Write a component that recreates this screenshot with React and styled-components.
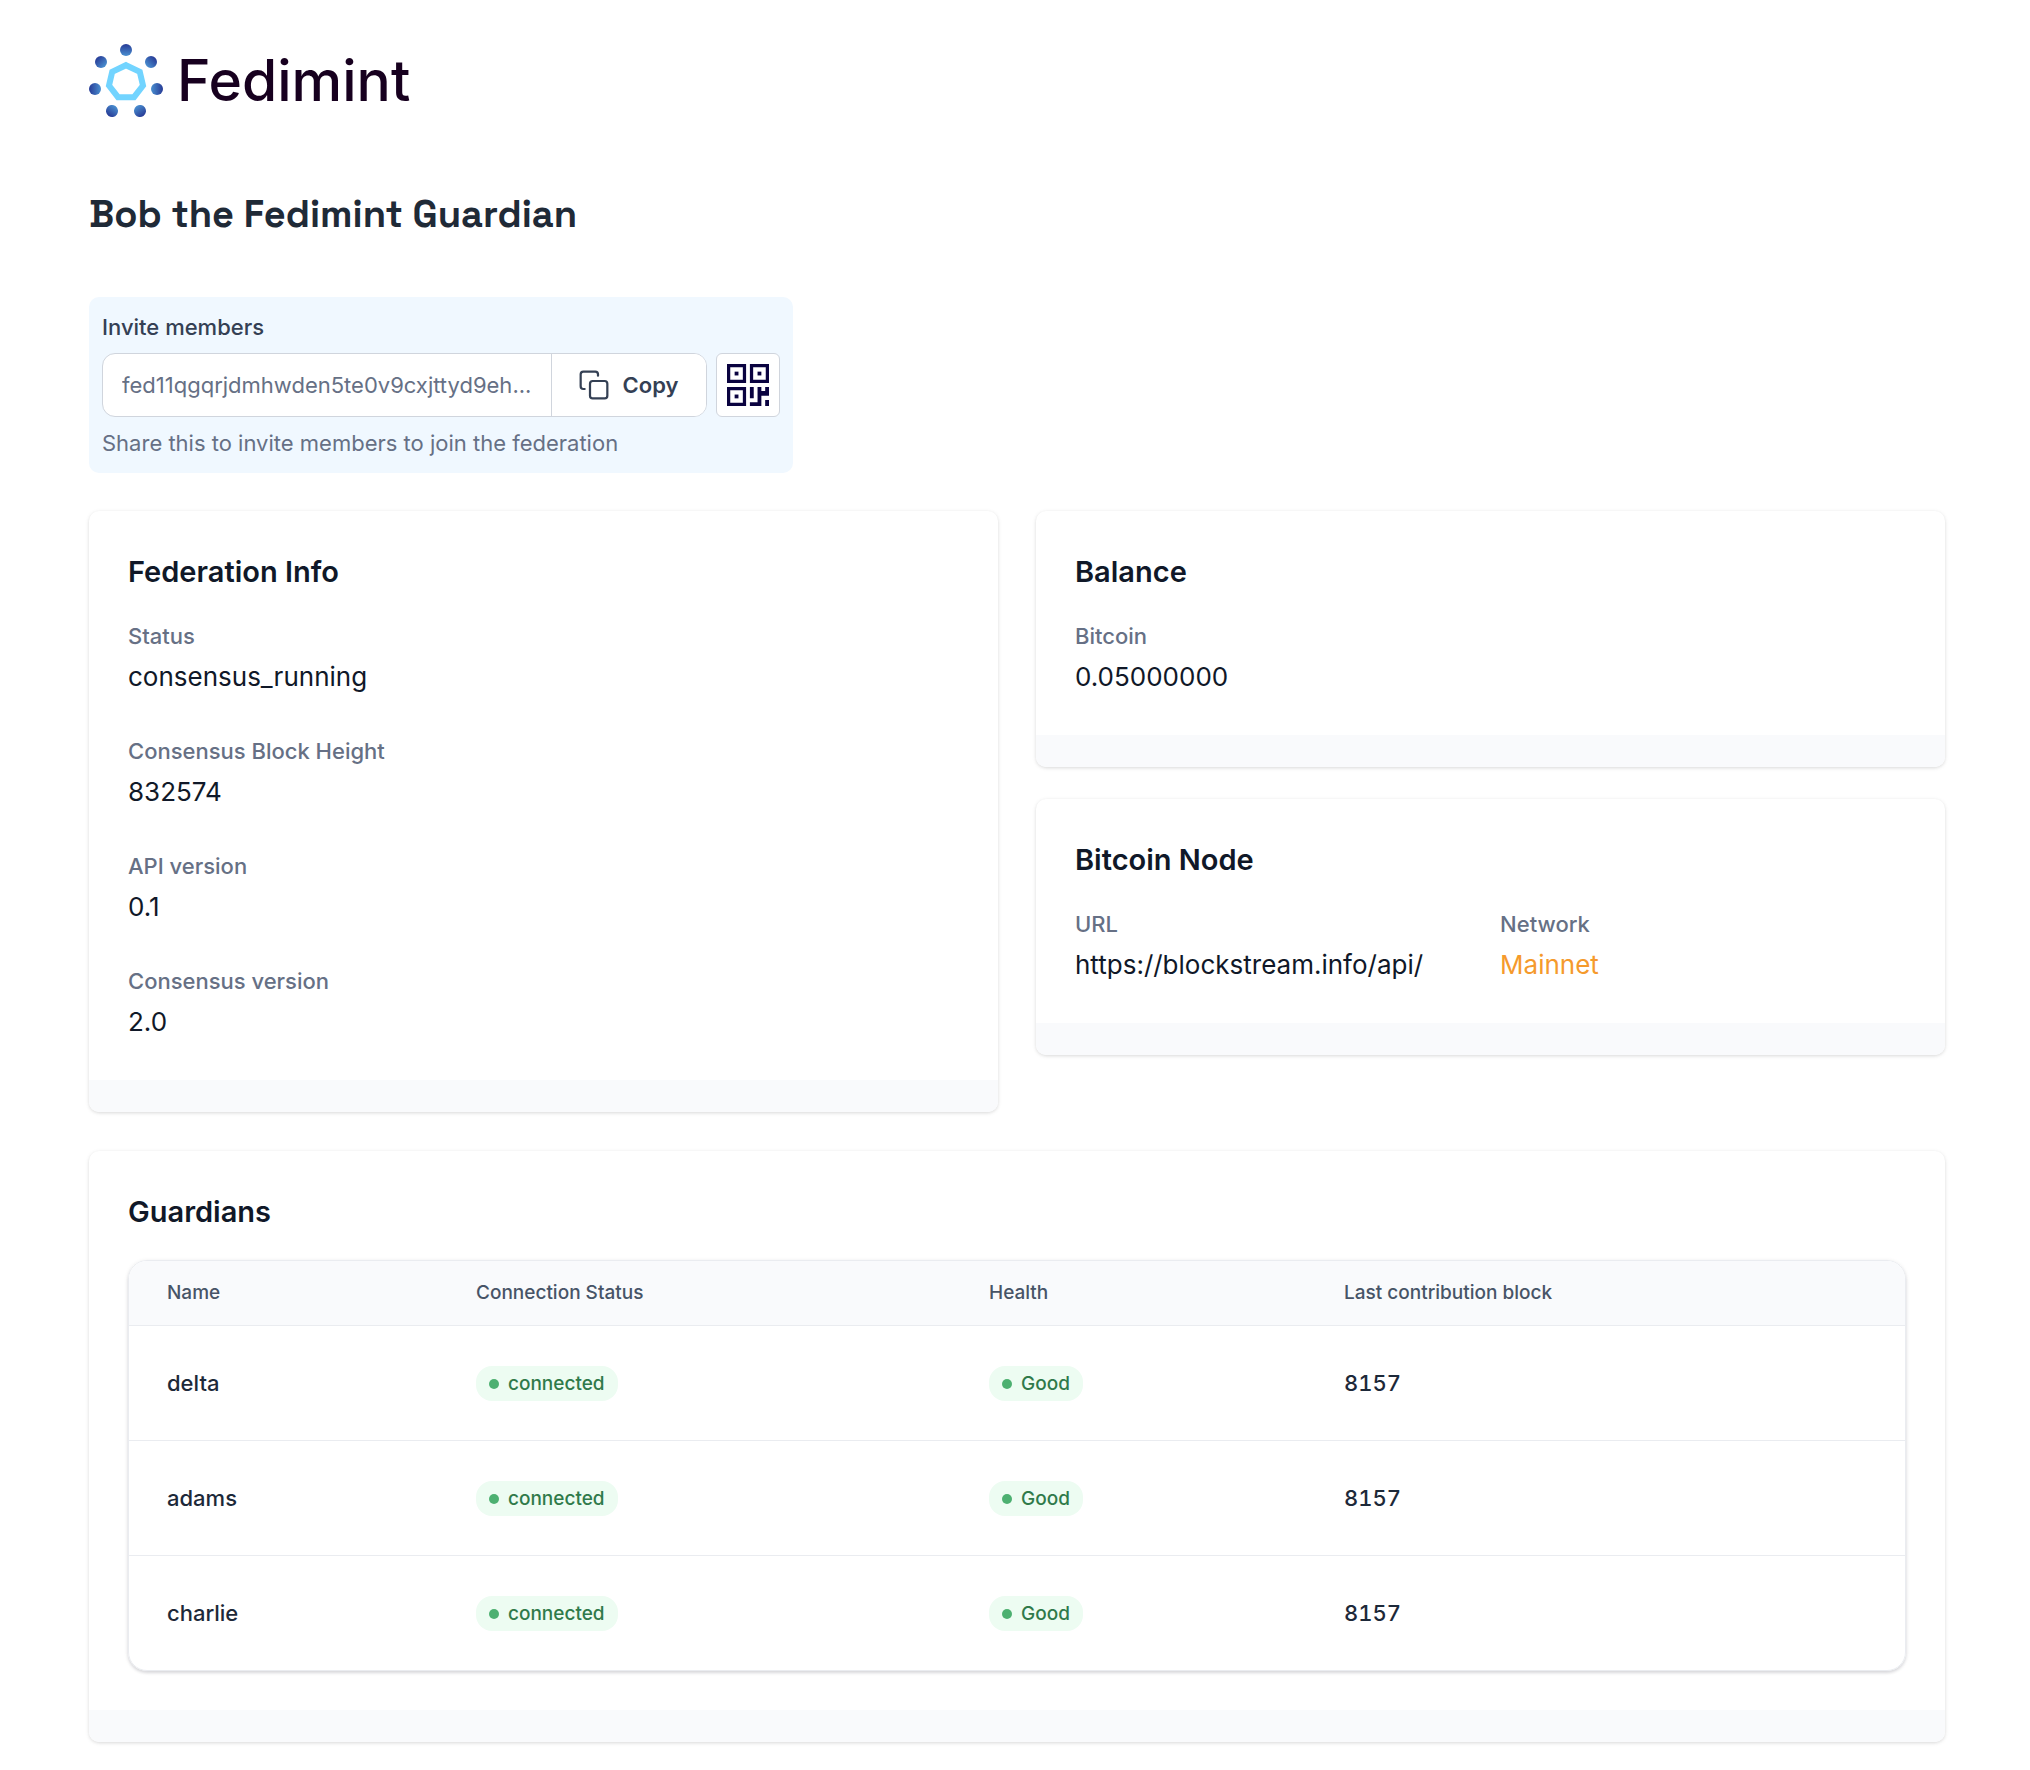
import React from "react";
import styled, { createGlobalStyle } from "styled-components";

const GlobalStyle = createGlobalStyle`
  *, *::before, *::after { box-sizing: border-box; }
  body {
    margin: 0;
    background: #fff;
    color: #101828;
    font-family: Inter, "Liberation Sans", sans-serif;
    -webkit-font-smoothing: antialiased;
  }
  h1, h2, p, dl, dd { margin: 0; }
`;

const Page = styled.main`
  display: flex;
  flex-direction: column;
  align-items: stretch;
  padding: 44px 85px 28px 89px;
`;

const Brand = styled.header`
  display: flex;
  align-items: center;
  gap: 14px;
  height: 74px;
`;

const BrandName = styled.span`
  color: #17001f;
  font-size: 57px;
  font-weight: 500;
  line-height: 74px;
`;

const Title = styled.h1`
  margin-top: 68px;
  color: #1f2a37;
  font-family: "Space Grotesk", Inter, sans-serif;
  font-size: 38px;
  font-weight: 700;
  line-height: 56px;
`;

const Invite = styled.section`
  display: flex;
  flex-direction: column;
  gap: 9px;
  width: 704px;
  max-width: 100%;
  margin-top: 55px;
  padding: 13px;
  border-radius: 10px;
  background: #f0f8ff;
`;

const InviteLabel = styled.label`
  color: #344054;
  font-size: 22px;
  font-weight: 500;
  line-height: 34px;
`;

const InviteRow = styled.div`
  display: flex;
  gap: 9px;
  height: 64px;
`;

const CopyGroup = styled.div`
  display: flex;
  flex: 1;
  min-width: 0;
  overflow: hidden;
  border: 1px solid #d0d5dd;
  border-radius: 13px;
  background: #fff;
`;

const CodeInput = styled.input`
  flex: 1;
  min-width: 0;
  padding: 0 8px 0 19px;
  border: 0;
  outline: 0;
  background: transparent;
  color: #667085;
  font: 400 22px/32px Inter, sans-serif;
  text-overflow: ellipsis;
`;

const CopyButton = styled.button`
  display: flex;
  align-items: center;
  justify-content: center;
  gap: 13px;
  width: 155px;
  padding: 0 2px 0 0;
  border: 0;
  border-left: 1px solid #d0d5dd;
  background: #fff;
  color: #344054;
  font: 600 22px/32px Inter, sans-serif;
  cursor: pointer;
`;

const QrButton = styled.button`
  display: flex;
  align-items: center;
  justify-content: center;
  width: 64px;
  padding: 0;
  border: 1px solid #d0d5dd;
  border-radius: 6px;
  background: #fff;
  cursor: pointer;
`;

const Helper = styled.p`
  color: #667085;
  font-size: 22px;
  line-height: 34px;
`;

const Columns = styled.div`
  display: grid;
  grid-template-columns: 1fr 1fr;
  align-items: start;
  gap: 38px;
  margin-top: 38px;
`;

const Stack = styled.div`
  display: flex;
  flex-direction: column;
  gap: 32px;
`;

const CardBox = styled.section`
  display: flex;
  flex-direction: column;
  overflow: hidden;
  margin-top: ${(p) => (p.$spaced ? "39px" : "0")};
  border-radius: 10px;
  background: #fff;
  box-shadow: 0 1px 4px rgba(0, 0, 0, 0.1), 0 1px 3px rgba(0, 0, 0, 0.06);
`;

const CardBody = styled.div`
  display: flex;
  flex-direction: column;
  gap: 26px;
  padding: 39px;
`;

const CardTitle = styled.h2`
  font-size: 29px;
  font-weight: 600;
  line-height: 44px;
`;

const CardFooter = styled.div`
  height: 32px;
  background: #f9fafc;
`;

const Facts = styled.dl`
  display: flex;
  flex-direction: ${(p) => (p.$inline ? "row" : "column")};
  gap: ${(p) => (p.$inline ? "77px" : "39px")};
`;

const FactBox = styled.div`
  display: flex;
  flex-direction: column;
  gap: 6px;
`;

const FactLabel = styled.dt`
  color: #667085;
  font-size: 22px;
  font-weight: 500;
  line-height: 32px;
`;

const FactValue = styled.dd`
  color: ${(p) => (p.$accent ? "#f59a2c" : "#101828")};
  font-size: 26px;
  font-weight: 400;
  line-height: 38px;
`;

const TableFrame = styled.div`
  overflow: hidden;
  border: 1px solid #eaecf0;
  border-radius: 19px;
  box-shadow: 0 1px 4px rgba(16, 24, 40, 0.1), 0 2px 3px rgba(16, 24, 40, 0.1);
`;

const Table = styled.table`
  width: 100%;
  border-collapse: separate;
  border-spacing: 0;
  text-align: left;
`;

const HeadCell = styled.th`
  width: ${(p) => p.$width}px;
  height: 65px;
  padding: 0 38px;
  border-bottom: 1px solid #eaecf0;
  background: #f9fafc;
  color: #475467;
  font-size: 19px;
  font-weight: 500;
  line-height: 28px;
`;

const Cell = styled.td`
  height: 115px;
  padding: 0 38px;
  border-bottom: 1px solid #eaecf0;
  color: #1d2939;
  font-size: 22px;
  font-weight: 500;
  line-height: 32px;
  font-variant-numeric: tabular-nums;

  tr:last-child > & {
    height: 114px;
    border-bottom: 0;
  }
`;

const Badge = styled.span`
  display: inline-flex;
  align-items: center;
  gap: 9px;
  height: 35px;
  padding: 1px 13px 0;
  border-radius: 16px;
  background: #edfcf2;
  color: #2f7a4a;
  font-size: 19px;
  font-weight: 500;
  line-height: 28px;
  vertical-align: middle;

  &::before {
    content: "";
    width: 10px;
    height: 10px;
    border-radius: 50%;
    background: #4db071;
  }
`;

const dots = [
  [37, 6, 90],
  [62, 18, 135],
  [68, 45, 180],
  [51, 67, 235],
  [23, 67, 305],
  [6, 45, 0],
  [12, 18, 45],
];

function LogoMark() {
  return (
    <svg width="74" height="74" viewBox="0 0 74 74" aria-hidden="true">
      <defs>
        <linearGradient id="dot" x1="0" y1="0" x2="1" y2="0">
          <stop offset="0" stopColor="#273b96" />
          <stop offset="1" stopColor="#4a8fd0" />
        </linearGradient>
      </defs>
      {dots.map(([x, y, angle]) => (
        <circle
          key={`${x}-${y}`}
          cx={x}
          cy={y}
          r="6"
          fill="url(#dot)"
          transform={`rotate(${angle} ${x} ${y})`}
        />
      ))}
      <path
        d="M37 21.2 L50.8 27.8 L54 41.6 L45 53.2 H29 L20 41.6 L23.2 27.8 Z"
        fill="none"
        stroke="#72d4ff"
        strokeWidth="6"
      />
    </svg>
  );
}

function CopyIcon() {
  return (
    <svg
      width="32"
      height="32"
      viewBox="0 0 24 24"
      fill="none"
      stroke="currentColor"
      strokeWidth="1.67"
      strokeLinecap="round"
      strokeLinejoin="round"
      aria-hidden="true"
    >
      <rect x="9" y="9" width="13" height="13" rx="2" />
      <path d="M5 15H4a2 2 0 0 1-2-2V4a2 2 0 0 1 2-2h9a2 2 0 0 1 2 2v1" />
    </svg>
  );
}

function QrIcon() {
  return (
    <svg width="42" height="42" viewBox="0 0 11 11" fill="#0a0340" aria-hidden="true">
      {[[0, 0], [6, 0], [0, 6]].map(([x, y]) => (
        <g key={`${x}-${y}`} transform={`translate(${x} ${y})`}>
          <path fillRule="evenodd" d="M0 0h5v5H0z M.85 .85v3.3h3.3V.85z" />
          <rect x="2" y="2" width="1" height="1" />
        </g>
      ))}
      <path d="M6 6h1v3H6z M8 6h1v1.1h1V6h1v2.3H9V11H6v-1h2z M10 9.4h1V11h-1z" />
    </svg>
  );
}

function Card({ title, spaced, children }) {
  return (
    <CardBox $spaced={spaced}>
      <CardBody>
        <CardTitle>{title}</CardTitle>
        {children}
      </CardBody>
      <CardFooter />
    </CardBox>
  );
}

function Fact({ label, value, accent }) {
  return (
    <FactBox>
      <FactLabel>{label}</FactLabel>
      <FactValue $accent={accent}>{value}</FactValue>
    </FactBox>
  );
}

const headings = [
  ["Name", 309],
  ["Connection Status", 513],
  ["Health", 355],
  ["Last contribution block", 599],
];

const guardians = [
  { name: "delta", status: "connected", health: "Good", block: 8157 },
  { name: "adams", status: "connected", health: "Good", block: 8157 },
  { name: "charlie", status: "connected", health: "Good", block: 8157 },
];

export default function App() {
  return (
    <>
      <GlobalStyle />
      <Page>
        <Brand>
          <LogoMark />
          <BrandName>Fedimint</BrandName>
        </Brand>
        <Title>Bob the Fedimint Guardian</Title>

        <Invite>
          <InviteLabel htmlFor="invite-code">Invite members</InviteLabel>
          <InviteRow>
            <CopyGroup>
              <CodeInput
                id="invite-code"
                readOnly
                value="fed11qgqrjdmhwden5te0v9cxjttyd9eh..."
              />
              <CopyButton type="button">
                <CopyIcon />
                Copy
              </CopyButton>
            </CopyGroup>
            <QrButton type="button" aria-label="Show QR code">
              <QrIcon />
            </QrButton>
          </InviteRow>
          <Helper>Share this to invite members to join the federation</Helper>
        </Invite>

        <Columns>
          <Card title="Federation Info">
            <Facts>
              <Fact label="Status" value="consensus_running" />
              <Fact label="Consensus Block Height" value="832574" />
              <Fact label="API version" value="0.1" />
              <Fact label="Consensus version" value="2.0" />
            </Facts>
          </Card>
          <Stack>
            <Card title="Balance">
              <Facts>
                <Fact label="Bitcoin" value="0.05000000" />
              </Facts>
            </Card>
            <Card title="Bitcoin Node">
              <Facts $inline>
                <Fact label="URL" value="https://blockstream.info/api/" />
                <Fact label="Network" value="Mainnet" accent />
              </Facts>
            </Card>
          </Stack>
        </Columns>

        <Card title="Guardians" spaced>
          <TableFrame>
            <Table>
              <thead>
                <tr>
                  {headings.map(([text, width]) => (
                    <HeadCell key={text} scope="col" $width={width}>
                      {text}
                    </HeadCell>
                  ))}
                </tr>
              </thead>
              <tbody>
                {guardians.map((g) => (
                  <tr key={g.name}>
                    <Cell>{g.name}</Cell>
                    <Cell>
                      <Badge>{g.status}</Badge>
                    </Cell>
                    <Cell>
                      <Badge>{g.health}</Badge>
                    </Cell>
                    <Cell>{g.block}</Cell>
                  </tr>
                ))}
              </tbody>
            </Table>
          </TableFrame>
        </Card>
      </Page>
    </>
  );
}
